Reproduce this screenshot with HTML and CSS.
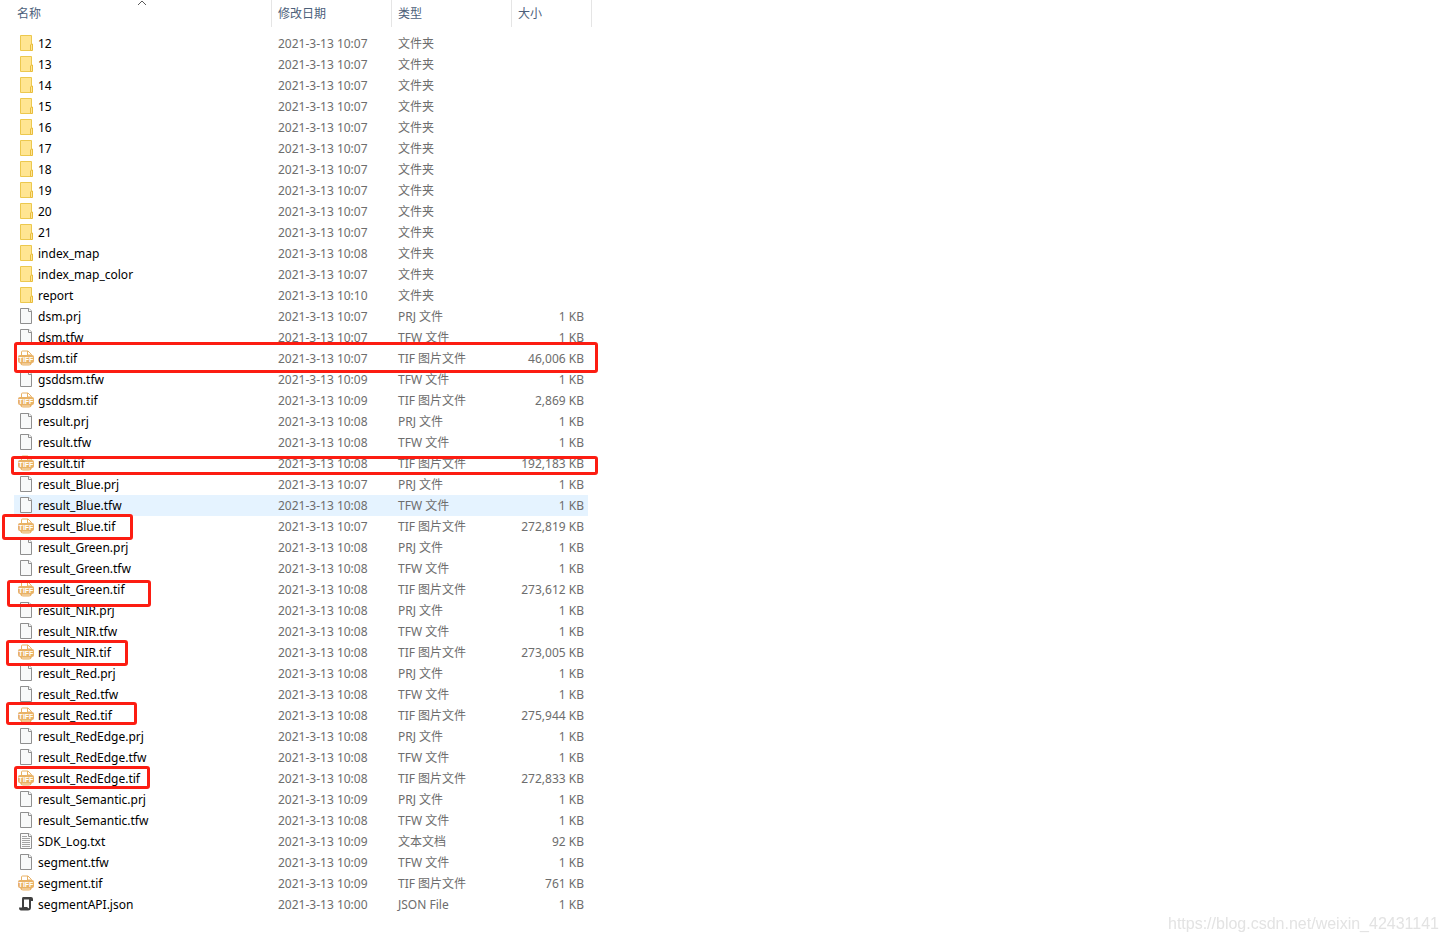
FILE: index.html
```html
<!DOCTYPE html>
<html lang="zh-CN">

<head>
    <meta charset="UTF-8">
    <meta name="viewport" content="width=device-width, initial-scale=1.0">
    <title>result</title>
    <link rel="stylesheet" href="styles.css">
</head>

<body>
    <!-- file icons -->
    <svg class="sprite" aria-hidden="true">
        <symbol id="folder" viewBox="0 0 16 16">
            <path d="M2.5 .5h11v15h-11z" fill="#ffe592" stroke="#ecc84e" />
            <path d="M12.5 15.5V10l1-1h1v6.5z" fill="#ffe596" stroke="#e8bd3c" />
        </symbol>
        <symbol id="page" viewBox="0 0 16 16">
            <path d="M2.5 .5H11L13.5 3v12.5h-11z" fill="#f8f9f9" stroke="#8f8f8f" />
            <path d="M10.5 .5v3h3" fill="#fff" stroke="#8f8f8f" />
        </symbol>
        <symbol id="text" viewBox="0 0 16 16">
            <path d="M2.5 .5H11L13.5 3v12.5h-11z" fill="#fafafa" stroke="#8f8f8f" />
            <path d="M10.5 .5v3h3" fill="#fff" stroke="#8f8f8f" />
            <path d="M4 3.5h5M4 5.5h8M4 7.5h8M4 9.5h8M4 11.5h8M4 13.500h8" stroke="#a3a3a3" />
        </symbol>
        <symbol id="tiff" viewBox="0 0 16 16">
            <path d="M3.5 6V2q0-1 1-1H10l3.500 3.500V6M9.500 1v4h4" fill="#fff" stroke="#e9b266" />
            <path d="M2 5h12q2 0 2 2v4q0 2-2 2H2q-2 0-2-2V7q0-2 2-2z" fill="#e9b266" />
            <path d="M2 13h12q-1 2.500-3 2.500H5Q3 15.500 2 13z" fill="#e9b266" />
            <path d="M4 14h8" stroke="#f7dfbd" />
            <text x="8" y="12" text-anchor="middle" class="tiff-label">TIFF</text>
        </symbol>
        <symbol id="json" viewBox="0 0 16 16">
            <path d="M5 1h8q2 0 2 2v2h-2v6.500q0 3-3 3H3q-2 0-2-3h3V3q0-2 1-2z" fill="#404040" />
            <path d="M6 3.500h5V12q-1 .5-1.500-.5V11H6z" fill="#fff" />
        </symbol>
    </svg>

    <main class="explorer">
        <table class="files">
            <colgroup>
                <col class="col-name">
                <col class="col-date">
                <col class="col-type">
                <col class="col-size">
            </colgroup>
            <thead>
                <tr>
                    <th aria-sort="ascending">
                        <button type="button">名称</button>
                        <svg class="sort" viewBox="0 0 10 6" aria-hidden="true"><path d="M1 5l4-4 4 4" /></svg>
                    </th>
                    <th><button type="button">修改日期</button></th>
                    <th><button type="button">类型</button></th>
                    <th><button type="button">大小</button></th>
                </tr>
            </thead>
            <tbody>
                <tr><td><svg><use href="#folder" /></svg>12</td><td>2021-3-13 10:07</td><td>文件夹</td><td></td></tr>
                <tr><td><svg><use href="#folder" /></svg>13</td><td>2021-3-13 10:07</td><td>文件夹</td><td></td></tr>
                <tr><td><svg><use href="#folder" /></svg>14</td><td>2021-3-13 10:07</td><td>文件夹</td><td></td></tr>
                <tr><td><svg><use href="#folder" /></svg>15</td><td>2021-3-13 10:07</td><td>文件夹</td><td></td></tr>
                <tr><td><svg><use href="#folder" /></svg>16</td><td>2021-3-13 10:07</td><td>文件夹</td><td></td></tr>
                <tr><td><svg><use href="#folder" /></svg>17</td><td>2021-3-13 10:07</td><td>文件夹</td><td></td></tr>
                <tr><td><svg><use href="#folder" /></svg>18</td><td>2021-3-13 10:07</td><td>文件夹</td><td></td></tr>
                <tr><td><svg><use href="#folder" /></svg>19</td><td>2021-3-13 10:07</td><td>文件夹</td><td></td></tr>
                <tr><td><svg><use href="#folder" /></svg>20</td><td>2021-3-13 10:07</td><td>文件夹</td><td></td></tr>
                <tr><td><svg><use href="#folder" /></svg>21</td><td>2021-3-13 10:07</td><td>文件夹</td><td></td></tr>
                <tr><td><svg><use href="#folder" /></svg>index_map</td><td>2021-3-13 10:08</td><td>文件夹</td><td></td></tr>
                <tr><td><svg><use href="#folder" /></svg>index_map_color</td><td>2021-3-13 10:07</td><td>文件夹</td><td></td></tr>
                <tr><td><svg><use href="#folder" /></svg>report</td><td>2021-3-13 10:10</td><td>文件夹</td><td></td></tr>
                <tr><td><svg><use href="#page" /></svg>dsm.prj</td><td>2021-3-13 10:07</td><td>PRJ 文件</td><td>1 KB</td></tr>
                <tr><td><svg><use href="#page" /></svg>dsm.tfw</td><td>2021-3-13 10:07</td><td>TFW 文件</td><td>1 KB</td></tr>
                <tr><td><svg><use href="#tiff" /></svg>dsm.tif</td><td>2021-3-13 10:07</td><td>TIF 图片文件</td><td>46,006 KB</td></tr>
                <tr><td><svg><use href="#page" /></svg>gsddsm.tfw</td><td>2021-3-13 10:09</td><td>TFW 文件</td><td>1 KB</td></tr>
                <tr><td><svg><use href="#tiff" /></svg>gsddsm.tif</td><td>2021-3-13 10:09</td><td>TIF 图片文件</td><td>2,869 KB</td></tr>
                <tr><td><svg><use href="#page" /></svg>result.prj</td><td>2021-3-13 10:08</td><td>PRJ 文件</td><td>1 KB</td></tr>
                <tr><td><svg><use href="#page" /></svg>result.tfw</td><td>2021-3-13 10:08</td><td>TFW 文件</td><td>1 KB</td></tr>
                <tr><td><svg><use href="#tiff" /></svg>result.tif</td><td>2021-3-13 10:08</td><td>TIF 图片文件</td><td>192,183 KB</td></tr>
                <tr><td><svg><use href="#page" /></svg>result_Blue.prj</td><td>2021-3-13 10:07</td><td>PRJ 文件</td><td>1 KB</td></tr>
                <tr class="active"><td><svg><use href="#page" /></svg>result_Blue.tfw</td><td>2021-3-13 10:08</td><td>TFW 文件</td><td>1 KB</td></tr>
                <tr><td><svg><use href="#tiff" /></svg>result_Blue.tif</td><td>2021-3-13 10:07</td><td>TIF 图片文件</td><td>272,819 KB</td></tr>
                <tr><td><svg><use href="#page" /></svg>result_Green.prj</td><td>2021-3-13 10:08</td><td>PRJ 文件</td><td>1 KB</td></tr>
                <tr><td><svg><use href="#page" /></svg>result_Green.tfw</td><td>2021-3-13 10:08</td><td>TFW 文件</td><td>1 KB</td></tr>
                <tr><td><svg><use href="#tiff" /></svg>result_Green.tif</td><td>2021-3-13 10:08</td><td>TIF 图片文件</td><td>273,612 KB</td></tr>
                <tr><td><svg><use href="#page" /></svg>result_NIR.prj</td><td>2021-3-13 10:08</td><td>PRJ 文件</td><td>1 KB</td></tr>
                <tr><td><svg><use href="#page" /></svg>result_NIR.tfw</td><td>2021-3-13 10:08</td><td>TFW 文件</td><td>1 KB</td></tr>
                <tr><td><svg><use href="#tiff" /></svg>result_NIR.tif</td><td>2021-3-13 10:08</td><td>TIF 图片文件</td><td>273,005 KB</td></tr>
                <tr><td><svg><use href="#page" /></svg>result_Red.prj</td><td>2021-3-13 10:08</td><td>PRJ 文件</td><td>1 KB</td></tr>
                <tr><td><svg><use href="#page" /></svg>result_Red.tfw</td><td>2021-3-13 10:08</td><td>TFW 文件</td><td>1 KB</td></tr>
                <tr><td><svg><use href="#tiff" /></svg>result_Red.tif</td><td>2021-3-13 10:08</td><td>TIF 图片文件</td><td>275,944 KB</td></tr>
                <tr><td><svg><use href="#page" /></svg>result_RedEdge.prj</td><td>2021-3-13 10:08</td><td>PRJ 文件</td><td>1 KB</td></tr>
                <tr><td><svg><use href="#page" /></svg>result_RedEdge.tfw</td><td>2021-3-13 10:08</td><td>TFW 文件</td><td>1 KB</td></tr>
                <tr><td><svg><use href="#tiff" /></svg>result_RedEdge.tif</td><td>2021-3-13 10:08</td><td>TIF 图片文件</td><td>272,833 KB</td></tr>
                <tr><td><svg><use href="#page" /></svg>result_Semantic.prj</td><td>2021-3-13 10:09</td><td>PRJ 文件</td><td>1 KB</td></tr>
                <tr><td><svg><use href="#page" /></svg>result_Semantic.tfw</td><td>2021-3-13 10:08</td><td>TFW 文件</td><td>1 KB</td></tr>
                <tr><td><svg><use href="#text" /></svg>SDK_Log.txt</td><td>2021-3-13 10:09</td><td>文本文档</td><td>92 KB</td></tr>
                <tr><td><svg><use href="#page" /></svg>segment.tfw</td><td>2021-3-13 10:09</td><td>TFW 文件</td><td>1 KB</td></tr>
                <tr><td><svg><use href="#tiff" /></svg>segment.tif</td><td>2021-3-13 10:09</td><td>TIF 图片文件</td><td>761 KB</td></tr>
                <tr><td><svg><use href="#json" /></svg>segmentAPI.json</td><td>2021-3-13 10:00</td><td>JSON File</td><td>1 KB</td></tr>
            </tbody>
        </table>

        <!-- red frames drawn over the list -->
        <div class="mark mark-dsm"></div>
        <div class="mark mark-result"></div>
        <div class="mark mark-blue"></div>
        <div class="mark mark-green"></div>
        <div class="mark mark-nir"></div>
        <div class="mark mark-red"></div>
        <div class="mark mark-rededge"></div>
    </main>

    <div class="watermark">https://blog.csdn.net/weixin_42431141</div>
</body>

</html>
```
FILE: styles.css
```css
* {
    box-sizing: border-box;
}

body {
    margin: 0;
    background-color: #fff;
    color: #000;
    font-family: "Noto Sans", "Noto Sans CJK SC", sans-serif;
    font-size: 12px;
}

.sprite {
    display: none;
}

.tiff-label {
    fill: #fff;
    font-family: "Liberation Sans", sans-serif;
    font-size: 7px;
    font-weight: bold;
}

.explorer {
    position: relative;
    padding-left: 14px;
}

/* file table */

.files {
    width: 578px;
    table-layout: fixed;
    border-collapse: collapse;
}

.col-name {
    width: 258px;
}

.col-date,
.col-type {
    width: 120px;
}

.col-size {
    width: 80px;
}

.files th {
    position: relative;
    height: 33px;
    padding: 0 0 6px;
}

.files th button {
    display: block;
    width: 100%;
    height: 27px;
    padding: 0 6px 2px;
    border: 0;
    border-right: 1px solid #e5e5e5;
    background: none;
    color: #4c607a;
    font: inherit;
    font-weight: normal;
    text-align: left;
}

.files th:first-child button {
    padding-left: 3px;
}

.sort {
    position: absolute;
    top: 0;
    left: 50%;
    width: 10px;
    height: 6px;
    margin-left: -6px;
    fill: none;
    stroke: #5a5a5a;
}

.files td {
    height: 21px;
    padding: 0 6px;
    color: #6d6d6d;
    line-height: 20px;
    white-space: nowrap;
}

.files td:first-child {
    padding-left: 4px;
    color: #000;
}

.files td:last-child {
    padding-right: 8px;
    text-align: right;
}

.files td svg {
    width: 16px;
    height: 16px;
    margin: 0 4px 2px 0;
    vertical-align: middle;
}

.files .active {
    background: linear-gradient(#e5f3ff, #e5f3ff) no-repeat;
    background-size: calc(100% - 4px) 100%;
}

/* frames */

.mark {
    position: absolute;
    border: 3px solid #fc1d12;
    border-radius: 3px;
}

.mark-dsm {
    top: 342px;
    left: 14px;
    width: 584px;
    height: 31px;
}

.mark-result {
    top: 456px;
    left: 11px;
    width: 587px;
    height: 19px;
}

.mark-blue {
    top: 514px;
    left: 2px;
    width: 131px;
    height: 26px;
}

.mark-green {
    top: 580px;
    left: 7px;
    width: 144px;
    height: 27px;
}

.mark-nir {
    top: 640px;
    left: 6px;
    width: 122px;
    height: 26px;
}

.mark-red {
    top: 702px;
    left: 6px;
    width: 131px;
    height: 23px;
}

.mark-rededge {
    top: 766px;
    left: 14px;
    width: 136px;
    height: 23px;
}

.watermark {
    position: fixed;
    right: 7px;
    bottom: 8px;
    color: #e3e3e3;
    font-family: "Liberation Sans", Arial, sans-serif;
    font-size: 16px;
    line-height: 20px;
}
```
